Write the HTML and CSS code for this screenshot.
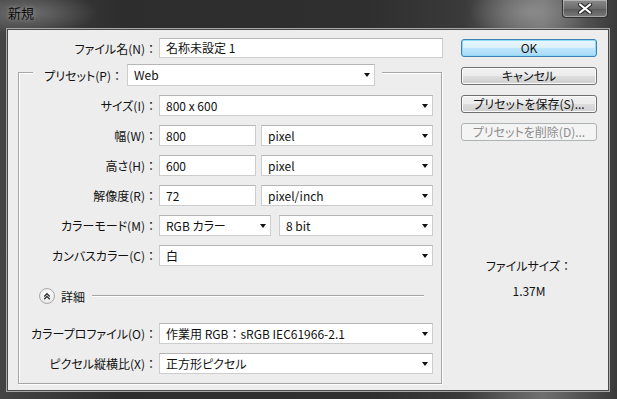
FILE: index.html
```html
<!DOCTYPE html>
<html lang="ja">
<head>
  <meta charset="UTF-8" />
  <title>新規</title>
  <link rel="stylesheet" href="styles.css">
</head>
<body>

<div class="window">
  <div class="titlebar">
    <span class="title">新規</span>
    <div class="close">
      <svg width="16" height="11" viewBox="0 0 16 11">
        <path d="M3 1.5 L13 9.5 M13 1.5 L3 9.5" stroke="#2a2a2a" stroke-width="4.2" stroke-linecap="round"/>
        <path d="M3 1.5 L13 9.5 M13 1.5 L3 9.5" stroke="#fff" stroke-width="2.2" stroke-linecap="round"/>
      </svg>
    </div>
  </div>

  <div class="client">
    <div class="main">
      <div class="name-row">
        <label class="label name-label">ファイル名(N)</label>
        <div class="field name-field">名称未設定 1</div>
      </div>

      <div class="group">
        <div class="group-head">
          <label class="label preset-label">プリセット(P)</label>
          <div class="field select preset-field">Web</div>
        </div>

        <div class="row">
          <label class="label">サイズ(I)</label>
          <div class="field select w-full">800 x 600</div>
        </div>
        <div class="row">
          <label class="label">幅(W)</label>
          <div class="field w-num">800</div>
          <div class="field select w-unit">pixel</div>
        </div>
        <div class="row">
          <label class="label">高さ(H)</label>
          <div class="field w-num">600</div>
          <div class="field select w-unit">pixel</div>
        </div>
        <div class="row">
          <label class="label">解像度(R)</label>
          <div class="field w-num">72</div>
          <div class="field select w-unit">pixel/inch</div>
        </div>
        <div class="row">
          <label class="label">カラーモード(M)</label>
          <div class="field select w-mode">RGB カラー</div>
          <div class="field select w-bit">8 bit</div>
        </div>
        <div class="row">
          <label class="label">カンバスカラー(C)</label>
          <div class="field select w-full">白</div>
        </div>

        <div class="details">
          <span class="toggle">
            <svg width="15" height="15" viewBox="0 0 15 15">
              <path d="M4.5 7.5 L7.5 4.5 L10.5 7.5 M4.5 10.5 L7.5 7.5 L10.5 10.5" fill="none" stroke="#333" stroke-width="1.4"/>
            </svg>
          </span>
          <span class="details-text">詳細</span>
          <span class="rule"></span>
        </div>

        <div class="row row-profile">
          <label class="label">カラープロファイル(O)</label>
          <div class="field select w-full">作業用 RGB<span class="colon">：</span>sRGB IEC61966-2.1</div>
        </div>
        <div class="row">
          <label class="label">ピクセル縦横比(X)</label>
          <div class="field select w-full">正方形ピクセル</div>
        </div>
      </div>
    </div>

    <div class="side">
      <button class="btn default">OK</button>
      <button class="btn">キャンセル</button>
      <button class="btn">プリセットを保存(S)...</button>
      <button class="btn" disabled>プリセットを削除(D)...</button>
      <div class="size-label">ファイルサイズ<span class="colon">：</span></div>
      <div class="size-value">1.37M</div>
    </div>
  </div>
</div>

</body>
</html>
```

FILE: styles.css
```css
* {
  box-sizing: border-box;
}
body {
  margin: 0;
  font-family: "Noto Sans CJK JP", sans-serif;
  font-size: 12px;
  font-feature-settings: "palt";
  color: #111;
}
.window {
  width: 617px;
  height: 399px;
  display: flex;
  flex-direction: column;
  background:
    radial-gradient(ellipse 70px 22px at 28px 13px, rgba(150, 150, 150, 0.55), transparent),
    radial-gradient(ellipse 60px 30px at 530px 12px, rgba(160, 160, 160, 0.6), transparent),
    linear-gradient(to right, #444 0, #2d2d2d 20%, #2f2f2f 60%, #3a3a3a 75%, #5e5e5e 83%, #707070 88%, #505050 95%, #3a3a3a 100%);
}
.titlebar {
  height: 29px;
  display: flex;
  justify-content: space-between;
  align-items: flex-start;
  padding-left: 8px;
}
.title {
  line-height: 26px;
  font-size: 13px;
  color: #0c0c0c;
  text-shadow: 0 0 4px rgba(200, 200, 200, 0.6);
}
.close {
  width: 46px;
  height: 18px;
  margin-right: 9px;
  display: flex;
  align-items: center;
  justify-content: center;
  border: 1px solid #2e2e2e;
  border-top: none;
  border-radius: 0 0 4px 4px;
  background: linear-gradient(#8a8a8a, #6c6c6c 50%, #5a5a5a 51%, #7a7a7a);
  box-shadow: inset 0 0 0 1px rgba(255, 255, 255, 0.35);
}

.client {
  height: 362px;
  margin: 0 8px 8px 7px;
  display: flex;
  padding: 8px 11px 0 0;
  background: #ededed;
  border: 1px solid #4a4a4a;
  box-shadow: 0 0 0 1px #a8a8a8;
}
.main {
  width: 436px;
}

.label {
  text-align: right;
  white-space: nowrap;
}
.label::after,
.colon {
  content: "：";
  font-feature-settings: normal;
}
.field {
  height: 21px;
  line-height: 19px;
  padding-left: 6px;
  background: #fff;
  border: 1px solid #cdcdcd;
  border-top-color: #b5b5b5;
  white-space: nowrap;
}
.select {
  position: relative;
}
.select::after {
  content: "";
  position: absolute;
  right: 4px;
  top: 8px;
  border-left: 3.5px solid transparent;
  border-right: 3.5px solid transparent;
  border-top: 4px solid #111;
}

.name-row {
  display: flex;
  align-items: center;
  gap: 2px;
}
.name-label {
  width: 149px;
}
.name-field {
  width: 284px;
  height: 20px;
  line-height: 18px;
}

.group {
  width: 424px;
  height: 312px;
  margin: 14px 0 0 10px;
  border: 1px solid #a6a6a6;
  box-shadow: 1px 1px 0 #fff, inset 1px 1px 0 #fff;
}
.group-head {
  display: flex;
  align-items: center;
  gap: 4px;
  width: fit-content;
  height: 22px;
  margin: -9px 0 0 14px;
  padding-right: 7px;
  background: #ededed;
}
.preset-label {
  width: 90px;
}
.preset-field {
  width: 248px;
  height: 22px;
  line-height: 20px;
}

.row {
  display: flex;
  align-items: center;
  margin-top: 9px;
}
.row .label {
  width: 138px;
  margin-right: 2px;
}
.w-full { width: 274px; }
.w-num { width: 97px; margin-right: 5px; }
.w-unit { width: 172px; }
.w-mode { width: 112px; margin-right: 8px; }
.w-bit { width: 154px; }

.details {
  display: flex;
  align-items: center;
  height: 16px;
  margin: 22px 17px 0 20px;
}
.toggle {
  width: 16px;
  height: 16px;
  display: flex;
  align-items: center;
  justify-content: center;
  border: 1px solid #a9a9a9;
  border-radius: 50%;
  background: radial-gradient(circle at 50% 35%, #fff, #e2e2e2);
}
.details-text {
  margin-left: 6px;
}
.rule {
  flex: 1;
  margin-left: 7px;
  border-top: 1px solid #a6a6a6;
  border-bottom: 1px solid #fff;
}
.row-profile {
  margin-top: 19px;
}

.side {
  margin-left: auto;
  width: 136px;
  display: flex;
  flex-direction: column;
  align-items: center;
}
.btn {
  width: 136px;
  height: 18px;
  margin-top: 10px;
  padding: 0;
  font: inherit;
  line-height: 16px;
  color: #111;
  border: 1px solid #707070;
  border-radius: 3px;
  background: linear-gradient(#f2f2f2 0%, #ebebeb 50%, #dddddd 51%, #cfcfcf 100%);
  box-shadow: inset 0 0 0 1px #fbfbfb;
}
.btn.default {
  margin-top: 1px;
  border-color: #3c7fb1;
  background: linear-gradient(#eaf6fd 0%, #d9f0fc 50%, #bee6fd 51%, #a7d9f5 100%);
  box-shadow: inset 0 0 0 1px #8fdcf7;
}
.btn:disabled {
  color: #8d8d8d;
  border-color: #adb2b5;
  background: #f4f4f4;
  box-shadow: none;
}
.size-label {
  margin-top: 116px;
  line-height: 18px;
}
.size-value {
  margin-top: 7px;
  line-height: 18px;
}
```
